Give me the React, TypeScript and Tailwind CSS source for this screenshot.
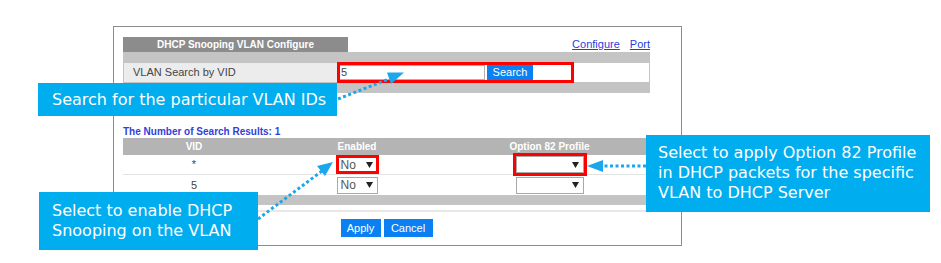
import React from "react";

const ui = { fontFamily: '"Liberation Sans", Arial, sans-serif' };
const callout = { fontFamily: '"DejaVu Sans", "Liberation Sans", sans-serif' };

function Select({ value, width }: { value?: string; width: string }) {
  return (
    <div
      className={`${width} h-[17px] border border-[#a9a9a9] bg-white flex items-center justify-between pl-[3px] pr-[4px] text-[12px] text-[#555]`}
    >
      <span>{value ?? ""}</span>
      <svg width="7" height="6" viewBox="0 0 7 6">
        <path d="M0 0 L7 0 L3.5 6 Z" fill="#222" />
      </svg>
    </div>
  );
}

function Arrows() {
  return (
    <svg
      className="absolute inset-0 pointer-events-none"
      width="941"
      height="263"
      viewBox="0 0 941 263"
    >
      <g stroke="#1aa7ec" strokeWidth="3" strokeDasharray="3 2.5" fill="none">
        <line x1="338" y1="99" x2="389" y2="79" />
        <line x1="646" y1="166" x2="602" y2="166" />
        <line x1="258" y1="219" x2="322" y2="171" />
      </g>
      <g fill="#1aa7ec">
        <polygon points="404,72.5 391,84 387,72.5" />
        <polygon points="587,166 603,160 603,172" />
        <polygon points="333,162 325,176 317,166" />
      </g>
    </svg>
  );
}

export default function App() {
  return (
    <div className="relative w-[941px] h-[263px] bg-white overflow-hidden" style={ui}>
      {/* device page frame */}
      <div className="ml-[113px] mt-[26px] w-[569px] h-[220px] border border-[#8c8c8c] pl-[9px]">
        <div className="w-[527px]">
          {/* title row */}
          <div className="mt-[10px] h-[15px] flex justify-between items-end">
            <div className="w-[225px] h-[15px] bg-[#8c8c8c] text-white text-[10px] font-bold flex items-center justify-center">
              DHCP Snooping VLAN Configure
            </div>
            <div className="flex gap-[10px] text-[11px] text-[#1f3fe0] underline leading-[13px] mb-[1px]">
              <span>Configure</span>
              <span>Port</span>
            </div>
          </div>

          {/* search panel */}
          <div className="bg-[#c4c4c4] py-[11px] px-[1px]">
            <div className="h-[19px] flex bg-white">
              <div className="w-[213px] bg-[#ececec] text-[11px] text-[#444] flex items-center pl-[9px]">
                VLAN Search by VID
              </div>
              <div className="relative flex-1 flex items-center gap-[2px] pl-[1px]">
                <div className="w-[147px] h-[15px] border border-[#b0b0b0] text-[11px] text-[#444] flex items-center pl-[2px]">
                  5
                </div>
                <div className="w-[46px] h-[15px] bg-[#0b80f2] text-white text-[11px] flex items-center justify-center">
                  Search
                </div>
                <div className="absolute left-0 -top-[1px] w-[237px] h-[21px] border-[3px] border-[#ff0000]" />
              </div>
            </div>
          </div>

          {/* results */}
          <div className="mt-[33px] h-[12px] leading-[12px] text-[10px] font-bold text-[#3340d8]">
            The Number of Search Results: 1
          </div>

          <div className="h-[17px] bg-[#b4b4b4] flex text-white text-[10px] font-bold">
            <div className="w-[142px] flex items-center justify-center">VID</div>
            <div className="w-[184px] flex items-center justify-center">Enabled</div>
            <div className="flex-1 flex items-center justify-center">Option 82 Profile</div>
          </div>

          <div className="h-[20px] flex border-b border-[#e2e2e2] text-[11px] text-[#444]">
            <div className="w-[142px] flex items-center justify-center">*</div>
            <div className="w-[184px] flex items-center justify-center">
              <div className="relative">
                <Select value="No" width="w-[41px]" />
                <div className="absolute -inset-[1px] border-[3px] border-[#ff0000]" />
              </div>
            </div>
            <div className="flex-1 flex items-center justify-center">
              <div className="relative">
                <Select width="w-[68px]" />
                <div className="absolute -inset-[3px] border-[3px] border-[#ff0000]" />
              </div>
            </div>
          </div>

          <div className="h-[20px] flex text-[11px] text-[#444]">
            <div className="w-[142px] flex items-center justify-center">5</div>
            <div className="w-[184px] flex items-center justify-center">
              <Select value="No" width="w-[41px]" />
            </div>
            <div className="flex-1 flex items-center justify-center">
              <Select width="w-[68px]" />
            </div>
          </div>

          <div className="h-[10px] bg-[#c4c4c4]" />
          <div className="mt-[5px] h-[2px] bg-[#e8e8e8]" />

          <div className="mt-[7px] flex justify-center gap-[3px]">
            <div className="w-[40px] h-[18px] bg-[#0b80f2] text-white text-[11px] flex items-center justify-center">
              Apply
            </div>
            <div className="w-[49px] h-[18px] bg-[#0b80f2] text-white text-[11px] flex items-center justify-center">
              Cancel
            </div>
          </div>
        </div>
      </div>

      {/* callouts */}
      <div
        className="absolute left-[38px] top-[83px] w-[299px] h-[33px] bg-[#00adef] text-white text-[16px] flex items-center pl-[14px]"
        style={callout}
      >
        Search for the particular VLAN IDs
      </div>
      <div
        className="absolute left-[646px] top-[135px] w-[284px] h-[77px] bg-[#00adef] text-white text-[16px] leading-[20px] pl-[12px] pt-[8px]"
        style={callout}
      >
        Select to apply Option 82 Profile
        <br />
        in DHCP packets for the specific
        <br />
        VLAN to DHCP Server
      </div>
      <div
        className="absolute left-[39px] top-[192px] w-[219px] h-[58px] bg-[#00adef] text-white text-[16px] leading-[20px] pl-[13px] pt-[9px]"
        style={callout}
      >
        Select to enable DHCP
        <br />
        Snooping on the VLAN
      </div>

      <Arrows />
    </div>
  );
}
